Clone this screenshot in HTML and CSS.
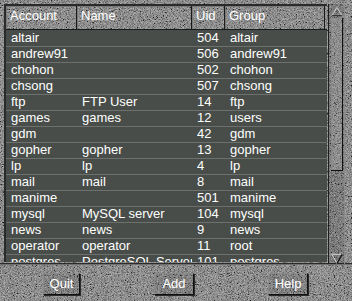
FILE: index.html
```html
<!DOCTYPE html>
<html>
<head>
<meta charset="utf-8">
<link rel="stylesheet" href="styles.css">
</head>
<body>
<div class="window">
  <div class="top">
    <div class="list">
      <div class="header">
        <div class="hcell">Account</div>
        <div class="hcell">Name</div>
        <div class="hcell">Uid</div>
        <div class="hcell">Group</div>
      </div>
      <div class="rows">
        <div class="row"><span>altair</span><span></span><span>504</span><span>altair</span></div>
        <div class="row"><span>andrew91</span><span></span><span>506</span><span>andrew91</span></div>
        <div class="row"><span>chohon</span><span></span><span>502</span><span>chohon</span></div>
        <div class="row"><span>chsong</span><span></span><span>507</span><span>chsong</span></div>
        <div class="row"><span>ftp</span><span>FTP User</span><span>14</span><span>ftp</span></div>
        <div class="row"><span>games</span><span>games</span><span>12</span><span>users</span></div>
        <div class="row"><span>gdm</span><span></span><span>42</span><span>gdm</span></div>
        <div class="row"><span>gopher</span><span>gopher</span><span>13</span><span>gopher</span></div>
        <div class="row"><span>lp</span><span>lp</span><span>4</span><span>lp</span></div>
        <div class="row"><span>mail</span><span>mail</span><span>8</span><span>mail</span></div>
        <div class="row"><span>manime</span><span></span><span>501</span><span>manime</span></div>
        <div class="row"><span>mysql</span><span>MySQL server</span><span>104</span><span>mysql</span></div>
        <div class="row"><span>news</span><span>news</span><span>9</span><span>news</span></div>
        <div class="row"><span>operator</span><span>operator</span><span>11</span><span>root</span></div>
        <div class="row"><span>postgres</span><span>PostgreSQL Server</span><span>101</span><span>postgres</span></div>
      </div>
    </div>
    <div class="scrollbar">
      <div class="arrow">
        <svg width="13" height="11" viewBox="0 0 13 11"><polygon points="6.5,1 1,10 12,10" fill="none" stroke="#d8d8d8" stroke-width="1"/><line x1="1" y1="10" x2="12" y2="10" stroke="#111"/></svg>
      </div>
      <div class="thumb"></div>
      <div class="trough-rest"></div>
      <div class="arrow">
        <svg width="13" height="13" viewBox="0 0 13 13"><polygon points="1,2 12,2 6.5,12" fill="none" stroke="#d8d8d8" stroke-width="1"/><line x1="12" y1="2" x2="6.5" y2="12" stroke="#111" stroke-width="1.5"/></svg>
      </div>
    </div>
  </div>
  <div class="buttons">
    <button class="btn quit">Quit</button>
    <button class="btn add">Add</button>
    <button class="btn help">Help</button>
  </div>
</div>
</body>
</html>
```

FILE: styles.css
```css
html, body {
  margin: 0;
  padding: 0;
}
body {
  width: 352px;
  height: 301px;
  overflow: hidden;
  font-family: "Liberation Sans", Arial, sans-serif;
  font-size: 13px;
  color: #ffffff;
  background-color: #545454;
  background-image: url("data:image/svg+xml;utf8,<svg xmlns='http://www.w3.org/2000/svg' width='352' height='301'><filter id='n' x='0' y='0' width='100%25' height='100%25'><feTurbulence type='fractalNoise' baseFrequency='0.7 1.1' numOctaves='3' seed='4'/><feColorMatrix type='matrix' values='1.8 0 0 0 -0.4 1.8 0 0 0 -0.4 1.8 0 0 0 -0.4 0 0 0 0 1'/></filter><rect width='352' height='301' fill='%23555'/><rect width='352' height='301' filter='url(%23n)' opacity='0.55'/></svg>");
}
.window {
  display: flex;
  flex-direction: column;
  height: 301px;
}
.top {
  display: flex;
  padding: 4px 0 0 4px;
  height: 264px;
  box-sizing: border-box;
  border-bottom: 1px solid #2c2c2c;
  box-shadow: 0 1px 0 #707070;
}
.list {
  width: 323px;
  height: 258px;
  border: 2px solid #2a2a2a;
  border-right: 0;
  border-bottom: 0;
  box-sizing: border-box;
  overflow: hidden;
  background: #484d49;
}
.header {
  display: grid;
  grid-template-columns: 71px 115px 33px 100px;
  height: 24px;
  background-color: #555;
  background-image: url("data:image/svg+xml;utf8,<svg xmlns='http://www.w3.org/2000/svg' width='352' height='30'><filter id='n' x='0' y='0' width='100%25' height='100%25'><feTurbulence type='fractalNoise' baseFrequency='0.7 1.1' numOctaves='3' seed='9'/><feColorMatrix type='matrix' values='1.8 0 0 0 -0.4 1.8 0 0 0 -0.4 1.8 0 0 0 -0.4 0 0 0 0 1'/></filter><rect width='352' height='30' fill='%23555'/><rect width='352' height='30' filter='url(%23n)' opacity='0.55'/></svg>");
  border-bottom: 1px solid #1a1a1a;
  box-sizing: border-box;
}
.hcell {
  border-right: 1px solid #1a1a1a;
  box-shadow: inset 1px 1px 0 #7a7a7a;
  padding: 3px 0 0 4px;
  line-height: 14px;
  height: 23px;
  box-sizing: border-box;
}
.rows {
  display: flex;
  flex-direction: column;
  padding-top: 1px;
}
.row {
  display: grid;
  grid-template-columns: 71px 115px 33px 102px;
  height: 16px;
  box-sizing: border-box;
  border-bottom: 1px solid #6c716d;
  line-height: 14px;
  flex-shrink: 0;
}
.row span {
  padding-left: 5px;
  white-space: nowrap;
  overflow: hidden;
}
.scrollbar {
  width: 17px;
  height: 260px;
  box-sizing: border-box;
  border-left: 1px solid #1e1e1e;
  border-right: 1px solid #8a8a8a;
  margin-left: 1px;
  display: flex;
  flex-direction: column;
  padding: 2px 1px 0 2px;
  background: rgba(0,0,0,0.12);
}
.arrow {
  height: 12px;
  display: flex;
  justify-content: center;
  flex-shrink: 0;
}
.thumb {
  height: 152px;
  flex-shrink: 0;
  background: rgba(255,255,255,0.14);
  border-right: 1px solid #111;
  border-bottom: 1px solid #111;
  box-shadow: inset 1px 1px 0 #8a8a8a;
}
.trough-rest {
  flex: 1;
}
.buttons {
  display: flex;
  padding: 9px 0 0 43px;
  gap: 74px;
}
.btn {
  font-family: "Liberation Sans", Arial, sans-serif;
  font-size: 13px;
  color: #ffffff;
  height: 22px;
  padding: 0;
  margin: 0;
  background: rgba(0,0,0,0.08);
  border: 1px solid;
  border-color: #8a8a8a #111 #111 #8a8a8a;
  box-shadow: 1px 1px 0 #2a2a2a;
  line-height: 18px;
}
.quit { width: 37px; }
.add { width: 40px; }
.help { width: 40px; }
```
